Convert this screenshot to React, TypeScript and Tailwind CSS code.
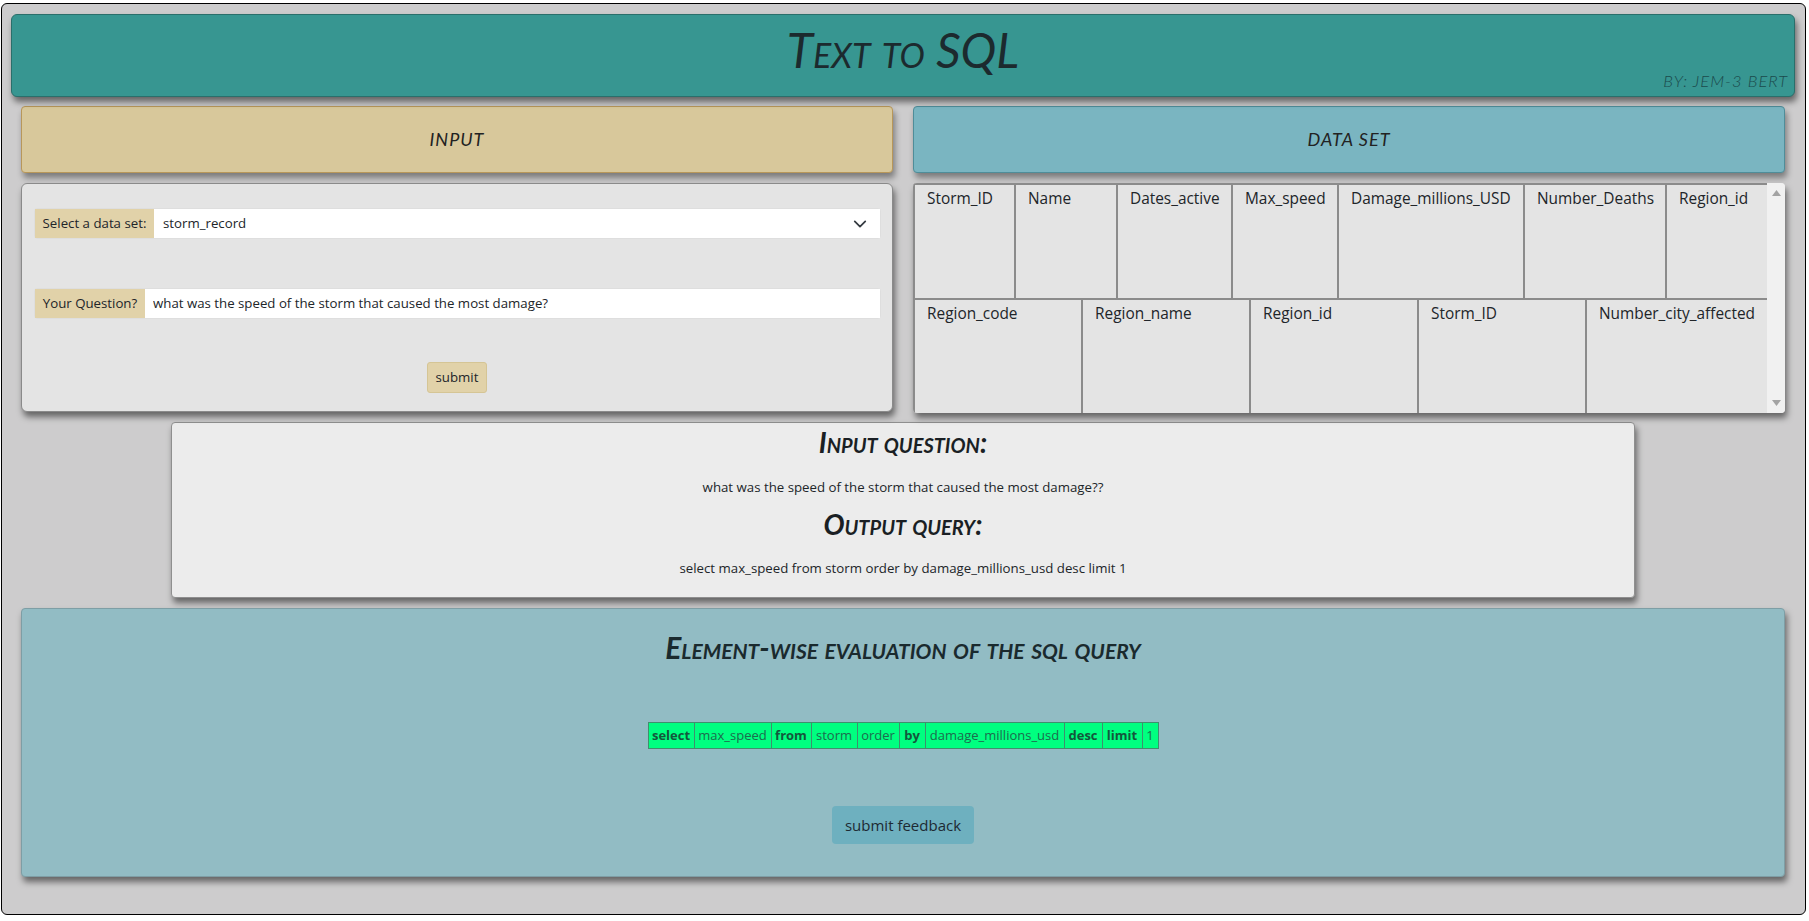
const firstRow = [
  { name: "Storm_ID", width: "w-[101px]" },
  { name: "Name", width: "w-[102px]" },
  { name: "Dates_active", width: "w-[115px]" },
  { name: "Max_speed", width: "w-[106px]" },
  { name: "Damage_millions_USD", width: "w-[186px]" },
  { name: "Number_Deaths", width: "w-[142px]" },
  { name: "Region_id", width: "w-[102px]" },
];

const secondRow = [
  { name: "Region_code", width: "w-[168px]" },
  { name: "Region_name", width: "w-[168px]" },
  { name: "Region_id", width: "w-[168px]" },
  { name: "Storm_ID", width: "w-[168px]" },
  { name: "Number_city_affected", width: "w-[182px]" },
];

const tokens = [
  { text: "select", bold: true, width: "w-[46px]" },
  { text: "max_speed", bold: false, width: "w-[77px]" },
  { text: "from", bold: true, width: "w-[40px]" },
  { text: "storm", bold: false, width: "w-[46px]" },
  { text: "order", bold: false, width: "w-[42px]" },
  { text: "by", bold: true, width: "w-[26px]" },
  { text: "damage_millions_usd", bold: false, width: "w-[139px]" },
  { text: "desc", bold: true, width: "w-[38px]" },
  { text: "limit", bold: true, width: "w-[40px]" },
  { text: "1", bold: false, width: "w-[16px]" },
];

function ColumnTable({ columns, height }: { columns: { name: string; width: string }[]; height: string }) {
  return (
    <table className="w-[854px] table-fixed border-collapse">
      <thead>
        <tr>
          {columns.map((col) => (
            <th
              key={col.name}
              className={`${col.width} ${height} border-2 border-[#8b8b8b] pl-[12px] pt-[2px] text-left align-top text-[15.4px] leading-[24px] font-normal whitespace-nowrap text-[#212529]`}
            >
              {col.name}
            </th>
          ))}
        </tr>
      </thead>
    </table>
  );
}

export default function App() {
  return (
    <div className="bg-white pl-[1px] pr-[3px] pt-[3px] pb-[6px] [font-family:'Open_Sans',sans-serif] text-[#212529]">
      <div className="h-[912px] rounded-[6px] border border-black bg-[#cdcccd] pl-[9px] pr-[9px] pt-[10px]">
        <header className="relative flex h-[83px] w-[1784px] items-center justify-center rounded-[6px] border border-[#2a6f6b] bg-[#379691] pb-[12px] shadow-[2px_5px_6px_rgba(0,0,0,0.5)]">
          <h1 className="[font-family:'Lato',sans-serif] [font-variant-caps:small-caps] text-[48px] leading-none font-normal italic text-[#1c2a2e]">
            Text to SQL
          </h1>
          <span className="absolute right-[6px] bottom-[2px] [font-family:'Lato',sans-serif] text-[16.5px] font-light italic tracking-[1px] text-[#1b4a4c]">
            BY: JEM-3 BERT
          </span>
        </header>

        <div className="mt-[9px] ml-[10px] flex w-[1764px] gap-[20px]">
          <div className="flex w-[872px] flex-col gap-[10px]">
            <div className="flex h-[67px] items-center justify-center rounded-[4px] border border-[#b8975a] bg-[#d8c89b] [font-family:'Lato',sans-serif] text-[18px] italic tracking-[1px] text-[#222] shadow-[2px_5px_6px_rgba(0,0,0,0.4)]">
              INPUT
            </div>
            <div className="flex h-[229px] flex-col rounded-[6px] border border-[#8a8a8a] bg-[#e4e4e4] px-[12px] pt-[24px] text-[13.25px] shadow-[2px_5px_6px_rgba(0,0,0,0.5)]">
              <div className="relative flex h-[31px] w-[847px] rounded-[3px] border border-[#dedede] bg-white">
                <label className="flex w-[119px] shrink-0 items-center justify-center bg-[#e1d2a9] whitespace-nowrap">
                  Select a data set:
                </label>
                <select className="w-full appearance-none bg-white pl-[9px] outline-none">
                  <option>storm_record</option>
                </select>
                <svg className="pointer-events-none absolute top-[8px] right-[13px] h-[14px] w-[14px]" viewBox="0 0 16 16" fill="none" stroke="#343a40" strokeWidth="2" strokeLinecap="round" strokeLinejoin="round">
                  <path d="M2 5l6 6 6-6" />
                </svg>
              </div>
              <div className="mt-[49px] flex h-[31px] w-[847px] rounded-[3px] border border-[#dedede] bg-white">
                <label className="flex w-[110px] shrink-0 items-center justify-center bg-[#e1d2a9] whitespace-nowrap">
                  Your Question?
                </label>
                <input
                  readOnly
                  value="what was the speed of the storm that caused the most damage?"
                  className="w-full bg-white pl-[8px] outline-none"
                />
              </div>
              <button className="mx-auto mt-[43px] h-[31px] w-[60px] rounded-[3px] border border-[#d5c595] bg-[#e1d2a9]">
                submit
              </button>
            </div>
          </div>

          <div className="flex w-[872px] flex-col gap-[10px]">
            <div className="flex h-[67px] items-center justify-center rounded-[4px] border border-[#4f8d99] bg-[#7ab5c1] [font-family:'Lato',sans-serif] text-[18px] italic tracking-[1px] text-[#222] shadow-[2px_5px_6px_rgba(0,0,0,0.4)]">
              DATA SET
            </div>
            <div className="flex h-[230px] overflow-hidden rounded-[4px] bg-[#e4e4e4] shadow-[2px_5px_6px_rgba(0,0,0,0.5)]">
              <div className="w-[854px]">
                <ColumnTable columns={firstRow} height="h-[115px]" />
                <ColumnTable columns={secondRow} height="h-[114px] border-t-0" />
              </div>
              <div className="flex w-[18px] flex-col items-center justify-between bg-[#f1f1f1] py-[7px]">
                <svg className="h-[6px] w-[9px]" viewBox="0 0 9 6" fill="#a3a3a3"><polygon points="4.5,0 9,6 0,6" /></svg>
                <svg className="h-[6px] w-[9px]" viewBox="0 0 9 6" fill="#a3a3a3"><polygon points="0,0 9,0 4.5,6" /></svg>
              </div>
            </div>
          </div>
        </div>

        <section className="mt-[9px] ml-[160px] flex h-[176px] w-[1464px] flex-col items-center rounded-[4px] border border-[#8f8f8f] bg-[#ececec] pt-[2px] text-[13.25px] shadow-[2px_5px_6px_rgba(0,0,0,0.5)]">
          <h2 className="[font-family:'Lato',sans-serif] [font-variant-caps:small-caps] text-[28px] leading-[34px] font-bold italic text-[#1a1f24]">
            Input question:
          </h2>
          <p className="mt-[18px] leading-[20px]">what was the speed of the storm that caused the most damage??</p>
          <h2 className="mt-[10px] [font-family:'Lato',sans-serif] [font-variant-caps:small-caps] text-[28px] leading-[34px] font-bold italic text-[#1a1f24]">
            Output query:
          </h2>
          <p className="mt-[17px] leading-[20px]">select max_speed from storm order by damage_millions_usd desc limit 1</p>
        </section>

        <section className="mt-[10px] ml-[10px] flex h-[269px] w-[1764px] flex-col items-center rounded-[4px] border border-[#7e9ea5] bg-[#92bcc4] pt-[19px] shadow-[2px_5px_6px_rgba(0,0,0,0.5)]">
          <h2 className="[font-family:'Lato',sans-serif] [font-variant-caps:small-caps] text-[30px] leading-[38px] font-bold italic text-[#1a2a2e]">
            Element-wise evaluation of the sql query
          </h2>
          <table className="mt-[56px] table-fixed border-collapse">
            <tbody>
              <tr>
                {tokens.map((token) => (
                  <td
                    key={token.text}
                    className={`${token.width} h-[26px] border border-[#3f8f6e] bg-[#00ff80] px-0 text-center text-[13px] whitespace-nowrap ${token.bold ? "font-bold text-[#14573c]" : "font-normal text-[#1e6b4e]"}`}
                  >
                    {token.text}
                  </td>
                ))}
              </tr>
            </tbody>
          </table>
          <button className="mt-[57px] h-[38px] w-[142px] rounded-[4px] bg-[#6eb0bf] text-[15px] text-[#1d2a33]">
            submit feedback
          </button>
        </section>
      </div>
    </div>
  );
}
